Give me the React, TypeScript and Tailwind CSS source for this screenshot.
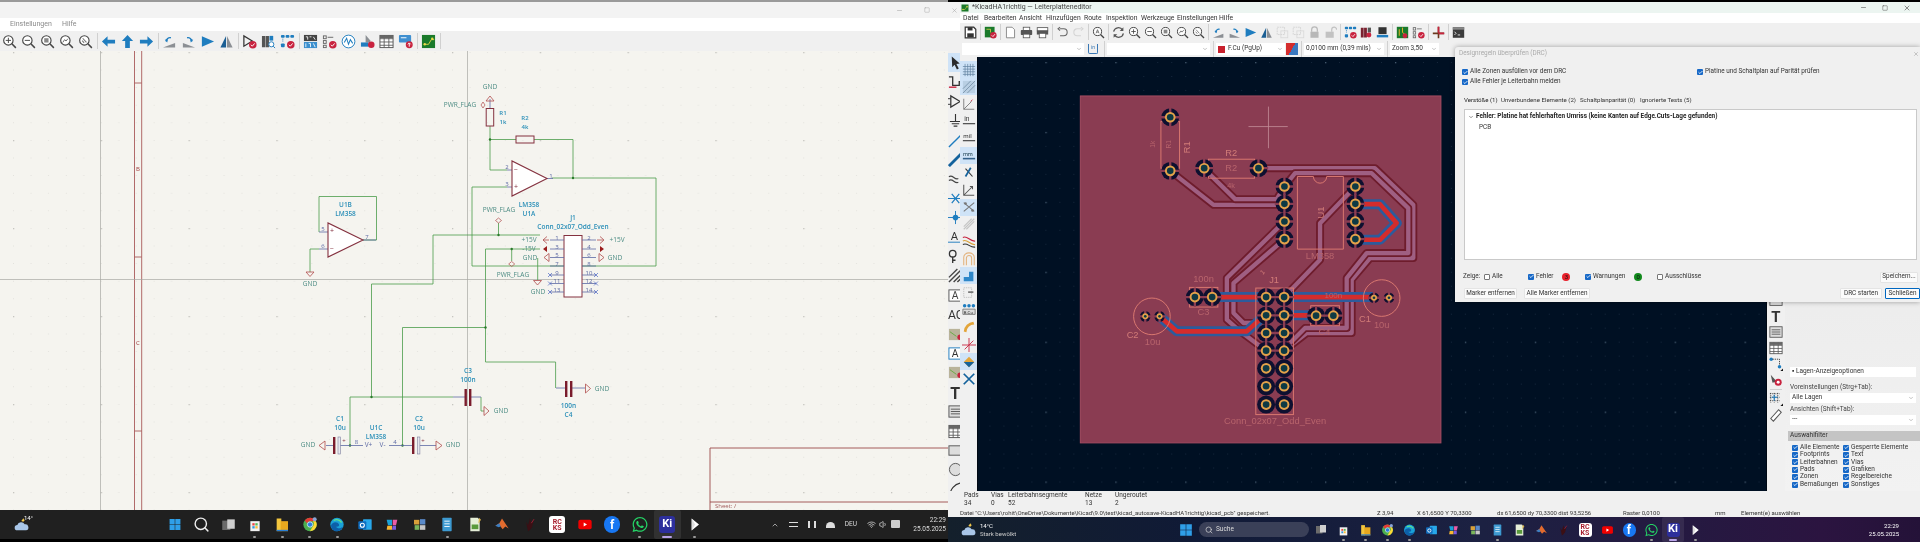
import type { ReactNode } from 'react';
import { FaWhatsapp } from 'react-icons/fa';
import { Check, ChevronDown, Minus, Search, Square, Wifi, Volume1, X, ChevronUp } from 'lucide-react';

const BLUE = '#1f7dbf';
const RED = '#c8233f';
const INK = '#444';

// 16x16 toolbar glyph
const G = ({ children, size = 15 }: { children: ReactNode; size?: number }) => (
  <svg viewBox="0 0 16 16" width={size} height={size} className="shrink-0">{children}</svg>
);

const Mag = ({ children }: { children?: ReactNode }) => (
  <>
    <circle cx="6.8" cy="6.8" r="5" fill="#fff" stroke={INK} strokeWidth="1.2" />
    <path d="M10.5 10.5L14.8 14.8" stroke={INK} strokeWidth="1.6" />
    {children}
  </>
);

const Badge = () => (
  <>
    <circle cx="11.5" cy="11.5" r="4" fill={RED} />
    <path d="M9.5 11.5l1.5 1.5 2.5-3" stroke="#fff" strokeWidth="1" fill="none" />
  </>
);

const icons: Record<string, ReactNode> = {
  zoomIn: <Mag><path d="M4 6.8h5.6M6.8 4v5.6" stroke={INK} strokeWidth="1" /></Mag>,
  zoomOut: <Mag><path d="M4 6.8h5.6" stroke={INK} strokeWidth="1" /></Mag>,
  zoomFit: <Mag><rect x="4.5" y="4.5" width="4.6" height="4.6" fill="#888" /></Mag>,
  zoomAuto: <Mag><path d="M4 9l2-3 1.5 1.5L9.5 5" stroke="#666" strokeWidth="1" fill="none" /></Mag>,
  zoomObj: <Mag><path d="M5 4.5l4 4.5M4.5 7l2 2.5" stroke="#777" strokeWidth="1.1" fill="none" /></Mag>,
  left: <path d="M1 8l6-5.5V6h8v4H7v3.5z" fill={BLUE} />,
  up: <path d="M8 1l6 6.5h-3.5V15h-5V7.5H2z" fill={BLUE} />,
  right: <path d="M15 8L9 2.5V6H1v4h8v3.5z" fill={BLUE} />,
  rotL: <><path d="M1 14.5L14 14.5 14 9.5z" fill="#8b8f94" /><path d="M4.5 8a4 4 0 015-4" stroke={BLUE} strokeWidth="1.4" fill="none" /><path d="M3 6l3.5-.5-1 3.500z" fill={BLUE} /></>,
  rotR: <><path d="M2 14.500L15 14.500 2 9.500z" fill="#8b8f94" /><path d="M11.500 8a4 4 0 00-5-4" stroke={BLUE} strokeWidth="1.4" fill="none" /><path d="M13 6l-3.500-.5 1 3.500z" fill={BLUE} /></>,
  flipH: <path d="M2 2.500L15 8 2 13.500z" fill={BLUE} />,
  flipV: <><path d="M7.500 2L7.500 14.500H1.500z" fill="#1c5f94" /><path d="M8.500 2L8.500 14.500H14.500z" fill="#8b8f94" /></>,
  symEdit: <><path d="M2 2v11l9-5.500z" fill="none" stroke="#333" strokeWidth="1.3" /><Badge /></>,
  libView: <><path d="M1 2h3.500v12H1zM5 2h3.500v12H5z" fill="#555" /><path d="M9 2h4v5H9z" fill="#1f7dbf" /><circle cx="11" cy="11" r="2.700" fill="#fff" stroke={BLUE} /><path d="M13 13l2 2" stroke={BLUE} /></>,
  pcbGear: <><rect x="1" y="1" width="4" height="3" rx="1" fill={BLUE} /><rect x="6" y="1" width="4" height="3" rx="1" fill={BLUE} /><rect x="11" y="1" width="4" height="3" rx="1" fill={BLUE} /><rect x="1" y="10" width="4" height="4" rx="1" fill={BLUE} /><path d="M3 5v4" stroke={BLUE} strokeDasharray="1 1" /><Badge /></>,
  annotate: <><rect x="1" y="1" width="14" height="6.500" fill="#444" /><rect x="1" y="8.500" width="14" height="6.500" fill="#3b8fce" /><path d="M3 3h2v3M7 3h2M11 3l2 3" stroke="#fff" strokeWidth=".9" fill="none" /><path d="M3 10v4M6 10h2v4M11 10l2 4" stroke="#fff" strokeWidth=".9" fill="none" /></>,
  erc: <><rect x="1.500" y="2" width="3" height="3" fill="none" stroke="#666" /><rect x="1.500" y="7" width="3" height="3" fill="none" stroke="#666" /><rect x="1.500" y="12" width="3" height="2.500" fill="none" stroke="#666" /><path d="M6 3.500h6" stroke="#666" /><Badge /></>,
  sim: <><circle cx="8" cy="8" r="6.800" fill="#fff" stroke={BLUE} strokeWidth="1" /><path d="M3.500 9L6 4.500 8 11 10 6l2.500 4" stroke={BLUE} strokeWidth="1.1" fill="none" /></>,
  bom: <><path d="M6 1l5 6v2H6z" fill="#8b8f94" /><rect x="1" y="9" width="8" height="4.500" fill={BLUE} /><circle cx="12" cy="11.500" r="3.500" fill={RED} /></>,
  table: <><rect x="1" y="1.500" width="14" height="13" fill="#fff" stroke="#555" /><path d="M1 5h14M1 8.500h14M1 12h14M5.500 1.500v13M10.500 1.500v13" stroke="#555" strokeWidth=".9" /><rect x="1" y="1.500" width="14" height="3" fill="#666" /></>,
  upload: <><rect x="1" y="1" width="13" height="8" rx="1" fill="#3f8fd0" /><path d="M3 4h6" stroke="#fff" /><circle cx="12" cy="11.500" r="3.700" fill={RED} /><path d="M12 13.500v-3.500M10.500 11l1.500-1.500 1.500 1.500" stroke="#fff" fill="none" /></>,
  board: <><rect x="1" y="1" width="14" height="14" fill="#1a7a2b" /><path d="M3 11h5l3-5h3" stroke="#d9d24a" strokeWidth="1" fill="none" /><circle cx="4" cy="11" r="1.300" fill="#e8d94a" /><circle cx="12" cy="5" r="1.300" fill="#e8d94a" /></>,
  save: <><path d="M1.500 1.500h10.500l2.500 2.500v10.500h-13z" fill="#fff" stroke="#333" strokeWidth="1.500" /><rect x="4.500" y="1.500" width="6" height="4" fill="#333" /><rect x="4" y="9" width="8" height="5" fill="#333" /></>,
  boardCheck: <><rect x="1" y="1" width="12" height="13" fill="#1a7a2b" /><path d="M3 4h5v4" stroke="#d9d24a" fill="none" /><Badge /></>,
  doc: <><path d="M3 1.500h7l3 3v10H3z" fill="#fff" stroke="#777" /></>,
  print: <><rect x="4" y="1.500" width="8" height="4" fill="#fff" stroke="#555" /><rect x="1" y="5" width="14" height="6" rx="1" fill="#555" /><rect x="4" y="10" width="8" height="4.500" fill="#fff" stroke="#555" /></>,
  plot: <><rect x="1.500" y="2" width="13" height="4" fill="#fff" stroke="#555" /><rect x="1" y="5.500" width="14" height="5" fill="#555" /><rect x="4" y="9" width="8" height="5.500" fill="#fff" stroke="#555" /></>,
  undo: <path d="M5 3.500H9.500a4 4 0 010 8.500H5M5 1.500L2.500 3.500 5 5.500" fill="none" stroke="#666" strokeWidth="1.300" />,
  redo: <path d="M11 3.500H6.500a4 4 0 000 8.500H11M11 1.500l2.500 2-2.500 2" fill="none" stroke="#d4d4d4" strokeWidth="1.300" />,
  find: <Mag><path d="M5 9l1.800-4.500L8.600 9M5.600 7.500h2.400" stroke="#555" strokeWidth=".9" fill="none" /></Mag>,
  refresh: <><path d="M2 7a6 6 0 0111-2M14 9a6 6 0 01-11 2" stroke="#555" strokeWidth="1.500" fill="none" /><path d="M14 1.500v4.500H9.500zM2 14.500V10h4.500z" fill="#555" /></>,
  group: <><path d="M1.500 1.500h9v9h-9z" fill="none" stroke="#cfcfcf" strokeDasharray="2 1" /><rect x="6" y="6" width="8.500" height="8.500" fill="none" stroke="#d8d8d8" /></>,
  lock: <><path d="M4.500 7V4.500a3.500 3.500 0 017 0V7" fill="none" stroke="#b8b8b8" strokeWidth="1.500" /><rect x="3" y="7" width="10" height="7.500" fill="#b8b8b8" /></>,
  unlock: <><path d="M9.500 7V4.500a3 3 0 016 0" fill="none" stroke="#c2c2c2" strokeWidth="1.500" /><rect x="2" y="7" width="10" height="7.500" fill="#c2c2c2" /></>,
  fpBrowse: <><path d="M1 2h3.500v12H1zM5 2h3.500v12H5z" fill="#7a2230" /><path d="M9.500 2h4v6h-4z" fill="#555" /><circle cx="11" cy="11" r="3" fill={RED} /></>,
  view3d: <><rect x="3" y="1.500" width="10" height="8.500" fill="#333" /><rect x="1" y="11" width="14" height="3" fill="#1f7dbf" /></>,
  net: <><path d="M1 1h14v14H1z" fill="#1a7a2b" /><path d="M4 4v8M8 2v6l4 3" stroke="#e3b32a" strokeWidth="1.200" fill="none" /><circle cx="11" cy="12" r="3" fill={RED} /></>,
  pin: <><path d="M8 1v14M1 9h14" stroke="#6b3a1f" strokeWidth="2" /><path d="M8 1v7M8 9h7" stroke="#c8233f" strokeWidth="2" /></>,
  term: <><rect x="1" y="1.500" width="14" height="13" fill="#3c3c3c" /><rect x="1" y="1.500" width="14" height="3" fill="#888" /><path d="M3 7l2 2-2 2M7 11h3" stroke="#fff" fill="none" /></>,
  select: <path d="M4 1.500l8.500 7.500-3.500.5 2.500 5-2 1-2.500-5-2.500 2.500z" fill="#2b2b2b" />,
  route: <><path d="M1 2h4v9h7v-4h3" fill="none" stroke="#333" strokeWidth="1.400" /><path d="M1 13h8" stroke={RED} strokeWidth="1.500" /></>,
  opamp: <><path d="M3 2v12l10-6z" fill="none" stroke="#333" strokeWidth="1.300" /><path d="M0 5h3M0 11h3M13 8h3" stroke="#333" /></>,
  ground: <path d="M8 1v8M2 9h12M4 11.500h8M6 14h4" stroke="#333" strokeWidth="1.200" />,
  line: <path d="M1 15L15 1" stroke={BLUE} strokeWidth="1.500" />,
  lineB: <path d="M1 15L15 1" stroke="#14629c" strokeWidth="3" />,
  wavy: <path d="M1 5c4-3 6 4 10 2M1 9c4-3 6 4 10 2" stroke="#444" strokeWidth="1.300" fill="none" />,
  xnet: <path d="M0 8h16M4 3l8 10M12 3l-8 10" stroke={BLUE} strokeWidth="1.300" />,
  junction: <><path d="M0 8h16M8 1v14" stroke={BLUE} /><circle cx="8" cy="8" r="3" fill={BLUE} /></>,
  labelA: <><text x="3" y="11" fontSize="12" fill="#333">A</text><path d="M0 13h16" stroke={BLUE} /></>,
  key: <><circle cx="5" cy="5" r="3.500" fill="none" stroke="#333" strokeWidth="1.400" /><path d="M5 8.500V15M5 12h3" stroke="#333" strokeWidth="1.400" /></>,
  hatch: <path d="M1 15L15 1M1 10l9-9M6 15l9-9M10 15l5-5" stroke="#444" strokeWidth="1.500" />,
  boxA: <><rect x="1" y="2" width="14" height="12" fill="#fff" stroke="#555" /><text x="4" y="12" fontSize="11" fill="#444">A</text></>,
  ac: <text x="0" y="12.500" fontSize="13" fill="#333">AC</text>,
  brd: <><rect x="1" y="2" width="14" height="12" fill="#b9b39a" /><path d="M2 5l7 5" stroke="#6a4" /><circle cx="13" cy="11" r="3" fill={RED} /></>,
  boxBlue: <><rect x="1" y="2" width="14" height="12" fill="#fff" stroke={BLUE} /><text x="4" y="12" fontSize="11" fill="#333">A</text></>,
  T: <text x="2.500" y="14.500" fontSize="17" fontWeight="700" fill="#333">T</text>,
  textBox: <><rect x="1" y="2" width="14" height="12" fill="#ddd" stroke="#555" /><path d="M3 5.500h10M3 8h10M3 10.500h10" stroke="#555" /></>,
  rect: <rect x="1" y="3" width="14" height="10" fill="#ddd" stroke="#555" />,
  circ: <circle cx="8" cy="8" r="6.500" fill="#ddd" stroke="#555" />,
  arc: <path d="M2 15C2 8 7 2 14 1" fill="none" stroke="#333" strokeWidth="1.200" />,
  tune: <><circle cx="2.500" cy="2.500" r="2" fill={BLUE} /><circle cx="12" cy="11" r="2" fill={BLUE} /><path d="M4 2.500h8v7" stroke="#333" strokeDasharray="1.500 1" fill="none" /><path d="M16 16h-3l3-3z" fill="#111" /></>,
  ptr: <><path d="M2 2l7 8-3 .5-2 .5z" fill="#555" /><circle cx="10.500" cy="10.500" r="4" fill="#c8233f" /><circle cx="10.500" cy="10.500" r="1.700" fill="#fff" /></>,
  gridFine: <><path d="M1 2h11M1 6h11M1 10h11M2 1v11M6 1v11M10 1v11" stroke="#333" strokeDasharray="1.300 1.300" /><path d="M6 3v7M3 6h7" stroke={BLUE} strokeWidth="1.200" /><path d="M16 16h-3l3-3z" fill="#111" /></>,
  ruler: <><path d="M2 12L11 2l3 3-9 10z" fill="#fff" stroke="#555" strokeWidth="1.200" /></>,
  grid: <><path d="M1 1h14v14H1z" fill="#cfe3f7" /><path d="M1 4h14M1 7h14M1 10h14M1 13h14M3.500 1v14M6.500 1v14M9.500 1v14M12.500 1v14" stroke="#5f7f9e" strokeWidth=".8" /></>,
  gridDiag: <><path d="M1 1h14v14H1z" fill="#b9cfe3" /><path d="M1 15L15 1M6 15l9-9M1 10l9-9" stroke="#7993ab" /></>,
  polar: <><path d="M2 14V2M2 14h12M2 14l9-9" stroke="#777" /><path d="M10 5l2-2" stroke={RED} /></>,
  inch: <><text x="2.500" y="8" fontSize="7.500" fill="#333">in</text><path d="M1 11h14" stroke="#555" strokeWidth="1.500" /></>,
  mil: <><text x="1.500" y="8" fontSize="7" fill="#333">mil</text><path d="M1 11h14" stroke="#555" strokeWidth="1.500" /></>,
  mm: <><text x="1" y="8" fontSize="6.500" fill="#245">mm</text><path d="M1 11h14" stroke="#34618a" strokeWidth="1.800" /></>,
  mouse: <><path d="M4 3l8 9" stroke="#333" strokeWidth="1.200" /><path d="M10 2L4 12" stroke="#14629c" strokeWidth="2" /></>,
  axis: <path d="M2 2v12h12M2 14L12 4M9 4h3v3" stroke="#555" fill="none" strokeWidth="1.200" />,
  ratsA: <><path d="M2 3l12 10M2 13L14 3" stroke="#777" strokeWidth="1.200" /><circle cx="4" cy="4" r="1.500" fill="#777" /><circle cx="12" cy="12" r="1.500" fill="#777" /></>,
  ratsB: <path d="M2 14L14 2M5 14L14 5M2 11L11 2" stroke="#c5c5c5" strokeWidth="1.300" />,
  curve: <><path d="M1 4c5-3 8 5 14 4" stroke={RED} strokeWidth="1.300" fill="none" /><path d="M1 8c5-3 8 5 14 4" stroke="#d9a13a" strokeWidth="1.300" fill="none" /><path d="M1 12c5-3 8 4 14 3" stroke="#333" strokeWidth="1.300" fill="none" /></>,
  rf: <path d="M2 15V6a6 5 0 0112 0v9M5 15V7a3 3 0 016 0v8" stroke="#e3b27c" fill="none" strokeWidth="1.200" />,
  zoneFill: <><rect x="1" y="1" width="14" height="14" fill="#cfe3f7" /><path d="M2 14h11V3H8v6H2z" fill="#2e87c9" /></>,
  dashLine: <><path d="M2 2h9v11H2z" stroke="#bbb" strokeDasharray="1.500 1" fill="none" /><path d="M7 7h6" stroke="#777" strokeWidth="2" /></>,
  netPads: <><circle cx="3" cy="3" r="2" fill={BLUE} /><circle cx="8" cy="3" r="2" fill={BLUE} /><circle cx="13" cy="3" r="2" fill={BLUE} /><path d="M1 7h14v6H1z" fill="#ddd" stroke="#777" /><text x="2" y="12" fontSize="5" fill="#333">B.Cu</text></>,
  protractor: <path d="M2 13A12 12 0 0113 2l1 3A9 9 0 005 14z" fill="#e3a53a" />,
  crossR: <path d="M0 8h16M8 0v16M3 13L13 3" stroke="#c8233f" strokeWidth="1" />,
  layerDot: <><rect x="1" y="1" width="14" height="14" fill="#cfe3f7" /><path d="M8 2l6 6-6 6-6-6z" fill="#e3a53a" /><path d="M8 8l6 0-6 6-6-6z" fill="#14629c" /></>,
  xBlue: <path d="M2 2l12 12M14 2L2 14" stroke="#14629c" strokeWidth="2" />,
};

const Tool = ({ name, w = 16, size = 15, on = false }: { name: string; w?: number; size?: number; on?: boolean }) => (
  <div className={`flex items-center justify-center shrink-0 h-[18px] ${on ? 'bg-[#cfe3f7]' : ''}`} style={{ width: w }}>
    <G size={size}>{icons[name]}</G>
  </div>
);

const Sep = () => (
  <div className="flex justify-center w-[4px] shrink-0">
    <div className="w-px h-[16px] bg-[#d0d0d0]" />
  </div>
);

const Combo = ({ w, children }: { w: string; children?: ReactNode }) => (
  <div className={`${w} h-[12px] bg-white flex items-center justify-between px-[2px] shrink-0 text-[6.500px] text-[#333]`}>
    <div className="flex items-center gap-[3px]">{children}</div>
    <ChevronDown size={6} color="#888" />
  </div>
);

// ---- taskbar ----
const Win = () => (
  <svg viewBox="0 0 24 24" className="w-full h-full">
    <path d="M2 2h9.500v9.500H2zM12.500 2H22v9.500h-9.500zM2 12.500h9.500V22H2zM12.500 12.500H22V22h-9.500z" fill="#2f9fe8" />
  </svg>
);

const appIcon: Record<string, ReactNode> = {
  store: <svg viewBox="0 0 24 24" className="w-full h-full"><path d="M5 7h14v15H5z" fill="#f2f2f2" /><rect x="8" y="10" width="3.500" height="3.500" fill="#e44" /><rect x="12.500" y="10" width="3.500" height="3.500" fill="#5b5" /><rect x="8" y="14.500" width="3.500" height="3.500" fill="#39d" /><rect x="12.500" y="14.500" width="3.500" height="3.500" fill="#fb3" /></svg>,
  explorer: <svg viewBox="0 0 24 24" className="w-full h-full"><path d="M4 3h7v19H4z" fill="#f4c63d" /><path d="M10 7h11v15H10z" fill="#e8a81e" /><path d="M4 20h17v2H4z" fill="#2a7fd4" /></svg>,
  chrome: <svg viewBox="0 0 24 24" className="w-full h-full"><circle cx="12" cy="12" r="10" fill="#4caf50" /><path d="M12 2a10 10 0 018.700 5H12a5 5 0 00-4.500 3L4 6a10 10 0 018-4z" fill="#e53935" /><path d="M20.700 7A10 10 0 0112 22l4.300-7.500a5 5 0 00-.2-7.500z" fill="#fdd835" /><circle cx="12" cy="12" r="4" fill="#2a7fe0" stroke="#fff" /><circle cx="19" cy="4" r="3" fill="#8aa4d6" /></svg>,
  edge: <svg viewBox="0 0 24 24" className="w-full h-full"><circle cx="12" cy="12" r="10" fill="#1aa2d8" /><path d="M3 14c1-6 10-7 12-2 1 3-3 4-5 3 3 4 8 3 11 0-2 6-8 8-12 7-3-1-6-4-6-8z" fill="#0d5fa8" /><path d="M7 6c4-2 9-1 12 3" stroke="#5fe08a" strokeWidth="2" fill="none" /></svg>,
  outlook: <svg viewBox="0 0 24 24" className="w-full h-full"><rect x="9" y="4" width="13" height="16" rx="1" fill="#28a8ea" /><rect x="2" y="7" width="12" height="12" rx="1.500" fill="#0f6cbd" /><circle cx="8" cy="13" r="3" fill="none" stroke="#fff" strokeWidth="1.600" /></svg>,
  copilot: <svg viewBox="0 0 24 24" className="w-full h-full"><path d="M4 5h8v8H6z" fill="#1aa2d8" /><path d="M13 5h7l-2 8h-5z" fill="#ec5ca8" /><path d="M5 14h7v6H4z" fill="#f7b733" /><path d="M13 14h5v6h-6z" fill="#7b5be0" /></svg>,
  photos: <svg viewBox="0 0 24 24" className="w-full h-full"><rect x="3" y="5" width="8" height="7" fill="#d9a13a" /><rect x="12" y="4" width="8" height="8" fill="#5a8ac9" /><rect x="4" y="13" width="7" height="7" fill="#7ab55c" /><rect x="12" y="13" width="8" height="7" fill="#c7c7c7" /></svg>,
  notepad: <svg viewBox="0 0 24 24" className="w-full h-full"><rect x="5" y="2" width="14" height="20" rx="1" fill="#3d9ad1" /><path d="M8 7h8M8 11h8M8 15h8" stroke="#e8f4fb" strokeWidth="1.500" /></svg>,
  sheet: <svg viewBox="0 0 24 24" className="w-full h-full"><path d="M5 2h11l3 3v17H5z" fill="#e6efd8" /><rect x="7" y="12" width="10" height="7" fill="#5a9a3c" /><path d="M18 2l3 3-4 6z" fill="#d8b34a" /></svg>,
  matlab: <svg viewBox="0 0 24 24" className="w-full h-full"><path d="M2 14l6-4 4-7 4 6 6 9-5-3-4 4-4-5z" fill="#e26b2e" /><path d="M2 14l6-4 2 5-3 1z" fill="#3b7fc4" /></svg>,
  dark: <svg viewBox="0 0 24 24" className="w-full h-full"><path d="M9 22L6 8l3 5 3-10 2 7 4-6-3 12-3 4z" fill="#3b0f14" /><path d="M14 10l4-6" stroke="#c8233f" strokeWidth="1" /></svg>,
  ks: <div className="w-full h-full bg-white rounded-[3px] flex items-center justify-center text-[7px] font-bold leading-[6px] text-[#a8202f] text-center">RC<br />KS</div>,
  yt: <svg viewBox="0 0 24 24" className="w-full h-full"><rect x="2" y="5" width="20" height="14" rx="3" fill="#f00000" /><path d="M10 9l5 3-5 3z" fill="#fff" /></svg>,
  fb: <div className="w-full h-full rounded-full bg-[#1877f2] flex items-center justify-center text-white font-bold text-[12px]">f</div>,
  wa: <FaWhatsapp className="w-full h-full text-[#25d366]" />,
  ki: <div className="w-full h-full rounded-[3px] bg-[#2d2f9c] flex items-center justify-center text-white font-bold text-[11px]">Ki</div>,
  play: <svg viewBox="0 0 24 24" className="w-full h-full"><path d="M7 3l11 9-11 9z" fill="#fff" /><path d="M7 3l5 9-5 9z" fill="#ddd" /></svg>,
  task: <svg viewBox="0 0 24 24" className="w-full h-full"><rect x="2" y="5" width="13" height="15" fill="#6b6b6b" /><rect x="10" y="3" width="12" height="15" fill="#cfcfcf" /></svg>,
};

const apps = ['store', 'explorer', 'chrome', 'edge', 'outlook', 'copilot', 'photos', 'notepad', 'sheet', 'matlab', 'dark', 'ks', 'yt', 'fb', 'wa', 'ki', 'play'];
const running = ['store', 'explorer', 'chrome', 'edge', 'notepad', 'wa', 'play'];

const Taskbar = ({ step, icon, big }: { step: string; icon: string; big: boolean }) => (
  <>
    {apps.map((a) => (
      <div key={a} className={`${step} h-full relative flex items-center justify-center shrink-0 ${a === 'ki' ? 'bg-[#ffffff14] rounded-[2px]' : ''}`}>
        <div className={icon}>{appIcon[a]}</div>
        {running.includes(a) && <div className="absolute bottom-[1px] w-[3px] h-[2px] rounded-full bg-[#9a9a9a]" />}
        {a === 'ki' && <div className={`absolute bottom-[1px] ${big ? 'w-[10px]' : 'w-[8px]'} h-[2px] rounded-full bg-[#b9a3e8]`} />}
      </div>
    ))}
  </>
);

// ---- schematic ----
const WIRE = '#4a9c4a';
const SYM = '#84313f';
const PWR = '#4d8c84';
const REF = '#2b8fb8';
const PIN = '#5d6aa5';

const wires = [
  'M490 126V170H507', 'M490 139.500H516', 'M534 139.500H573V178', 'M552 178H656V266H472V187H507',
  'M319 232V196.500H376.500V240H363', 'M319 249H310V272',
  'M540 235H433V284H371.500V397', 'M350 445.500V397H453',
  'M540 249H485.500V327.500', 'M402.500 445.500V327.500H485.500V362H555.600V388',
  'M498.500 223V235', 'M511.700 249V261', 'M537.700 258V280', 'M481 397V411H484',
];

const junctions: [number, number][] = [[490, 139.500], [573, 178], [498.500, 235], [511.700, 249], [371.500, 397], [485.500, 327.500], [350, 445.500], [402.500, 445.500]];

const Tx = ({ x, y, c = PWR, s = 6.500, a = 'middle', children }: { x: number; y: number; c?: string; s?: number; a?: 'middle' | 'start' | 'end'; children: ReactNode }) => (
  <text x={x} y={y} fill={c} fontSize={s} fontWeight={c === REF ? 600 : 400} textAnchor={a} dominantBaseline="middle">{children}</text>
);

const OpAmp = ({ pts }: { pts: string }) => <polygon points={pts} fill="#fff" stroke={SYM} strokeWidth="1.100" />;

const Cap = ({ x1, x2, y, h, pol }: { x1: number; x2: number; y: number; h: number; pol?: boolean }) => (
  <>
    <rect x={x1 - 1} y={y - h / 2} width="2.400" height={h} fill="#7a1c2c" />
    {pol ? <rect x={x2 - 1} y={y - h / 2} width="2.400" height={h} fill="#e8e8ee" stroke="#7d7f9e" strokeWidth=".6" /> : <rect x={x2 - 1} y={y - h / 2} width="2.400" height={h} fill="#7a1c2c" />}
  </>
);

const Schematic = () => (
  <svg viewBox="0 51 948 459" width="948" height="459" className="block font-['Open_Sans',sans-serif]">
    <defs>
      <pattern id="dots" x="13" y="52" width="87.800" height="88" patternUnits="userSpaceOnUse">
        {[0, 17.600, 35.200, 52.800, 70.400].map((y) => [0, 17.600, 35.200, 52.800, 70.400].map((x) => <rect key={`${x}${y}`} x={x} y={y} width=".8" height=".8" fill="#d9d8d3" />))}
      </pattern>
      <pattern id="dotsMajor" x="13" y="140" width="87.800" height="88" patternUnits="userSpaceOnUse">
        <rect width="1.300" height="1.300" fill="#c6c5c0" />
      </pattern>
    </defs>
    <rect x="0" y="51" width="948" height="459" fill="#f5f4ef" />
    <rect x="0" y="51" width="948" height="459" fill="url(#dots)" />
    <rect x="0" y="51" width="948" height="459" fill="url(#dotsMajor)" />

    {/* sheet border */}
    <path d="M134.500 51V510M141.700 51V510M134.500 83H141.700M134.500 257H141.700M134.500 431H141.700" stroke="#a95a5a" strokeWidth=".9" fill="none" />
    <Tx x={138} y={169} c="#a03c3c" s={6}>B</Tx>
    <Tx x={138} y={343} c="#a03c3c" s={6}>C</Tx>
    <path d="M710 510V448H948M710 502H948" stroke="#9c4a4a" strokeWidth=".9" fill="none" />
    <Tx x={715} y={506.500} c="#a05a5a" s={6} a="start">Sheet: /</Tx>

    {/* crosshair */}
    <path d="M100.500 51V510M467.500 51V510M0 279.500H948" stroke="#a8a8a4" strokeWidth=".7" />

    <g fill="none" stroke={WIRE} strokeWidth=".8">
      {wires.map((d) => <path key={d} d={d} />)}
    </g>
    {junctions.map(([x, y]) => <circle key={`${x}${y}`} cx={x} cy={y} r="1.200" fill="#2a7a2a" />)}

    {/* R1 R2 */}
    <path d="M490 99V108" stroke={PIN} strokeWidth=".8" />
    <rect x="486.200" y="108.500" width="7.500" height="17.500" fill="none" stroke={SYM} strokeWidth="1" />
    <rect x="516" y="136" width="18" height="7" fill="none" stroke={SYM} strokeWidth="1" />
    <Tx x={490} y={87}>GND</Tx>
    <path d="M490 96l-4 5h8z" fill="none" stroke="#b04c4c" strokeWidth=".8" />
    <Tx x={460} y={105}>PWR_FLAG</Tx>
    <path d="M483 102l2 3-2 3-2-3z" fill="none" stroke="#b04c4c" strokeWidth=".7" />
    <Tx x={503} y={113} c={REF} s={6}>R1</Tx>
    <Tx x={503} y={122} c={REF} s={6}>1k</Tx>
    <Tx x={525} y={118} c={REF} s={6}>R2</Tx>
    <Tx x={525} y={127} c={REF} s={6}>4k</Tx>

    {/* U1A */}
    <path d="M507 170H512M507 187H512M547 178.500H553" stroke={PIN} strokeWidth=".8" />
    <OpAmp pts="512,161 512,196 547,178.500" />
    <Tx x={507} y={167} c={PIN} s={6}>2</Tx>
    <Tx x={507} y={184} c={PIN} s={6}>3</Tx>
    <Tx x={551} y={176} c={PIN} s={6}>1</Tx>
    <Tx x={516} y={170} c={SYM} s={7}>−</Tx>
    <Tx x={516} y={187.500} c={SYM} s={7}>+</Tx>
    <Tx x={529} y={205} c={REF} s={6.500}>LM358</Tx>
    <Tx x={529} y={214} c={REF} s={6.500}>U1A</Tx>

    {/* U1B */}
    <path d="M319 232H328M319 249H328M363 240H376" stroke={PIN} strokeWidth=".8" />
    <OpAmp pts="328,223 328,257 363,240" />
    <Tx x={323} y={229} c={PIN} s={6}>5</Tx>
    <Tx x={323} y={246} c={PIN} s={6}>6</Tx>
    <Tx x={367} y={237} c={PIN} s={6}>7</Tx>
    <Tx x={332} y={231.500} c={SYM} s={7}>+</Tx>
    <Tx x={332} y={249} c={SYM} s={7}>−</Tx>
    <Tx x={345.500} y={205} c={REF} s={6.500}>U1B</Tx>
    <Tx x={345.500} y={214} c={REF} s={6.500}>LM358</Tx>
    <path d="M306 272h8l-4 4.500z" fill="none" stroke="#b04c4c" strokeWidth=".8" />
    <Tx x={310} y={284}>GND</Tx>

    {/* PWR flags */}
    <Tx x={499} y={210}>PWR_FLAG</Tx>
    <path d="M498.500 218l3 2.500-3 2.500-3-2.500z" fill="none" stroke="#b04c4c" strokeWidth=".7" />
    <Tx x={513} y={275}>PWR_FLAG</Tx>
    <path d="M511.700 261.500l3 2.500-3 2.500-3-2.500z" fill="none" stroke="#b04c4c" strokeWidth=".7" />

    {/* J1 */}
    <Tx x={573} y={218} c={REF} s={6.500}>J1</Tx>
    <Tx x={573} y={227} c={REF} s={6.500}>Conn_02x07_Odd_Even</Tx>
    <rect x="564" y="235.500" width="18" height="61.500" fill="#fff" stroke={SYM} strokeWidth="1" />
    {[240, 249, 257.500, 266, 275, 283.500, 292].map((y, i) => (
      <g key={y}>
        <path d={`M550 ${y}H564M582 ${y}H596`} stroke={PIN} strokeWidth=".8" />
        <Tx x={557} y={y - 2} c={PIN} s={6}>{i * 2 + 1}</Tx>
        <Tx x={589} y={y - 2} c={PIN} s={6}>{i * 2 + 2}</Tx>
        {i > 3 && <path d={`M548 ${y - 2}l4 4m0-4l-4 4M594 ${y - 2}l4 4m0-4l-4 4`} stroke="#4a66c4" strokeWidth=".7" />}
      </g>
    ))}
    <path d="M549 240h-6M547 236.500l-4 3.500 4 3.500M597 240h6M600 236.500l4 3.500-4 3.500" fill="none" stroke="#b04c4c" strokeWidth=".8" />
    <path d="M543 249l4-3v6zM604 249l-4-3v6z" fill="#9a1c1c" />
    <path d="M549 253.500l-5 4 5 4zM599 253.500l5 4-5 4z" fill="none" stroke="#b04c4c" strokeWidth=".8" />
    <Tx x={529} y={240}>+15V</Tx>
    <Tx x={529} y={249}>-15V</Tx>
    <Tx x={530} y={258}>GND</Tx>
    <Tx x={617} y={240}>+15V</Tx>
    <Tx x={615} y={258}>GND</Tx>
    <path d="M533.500 280.500h8l-4 4.500z" fill="none" stroke="#b04c4c" strokeWidth=".8" />
    <Tx x={538} y={292}>GND</Tx>

    {/* U1C, C1, C2 */}
    <path d="M326 445.500H334M339 445.500H363M389 445.500H413M418.500 445.500H436" stroke={PIN} strokeWidth=".8" />
    <Cap x1={334} x2={339} y={445.500} h={17} pol />
    <Cap x1={413} x2={418.500} y={445.500} h={17} pol />
    <path d="M325 441l-6 4.500 6 4.500zM436 441l6 4.500-6 4.500z" fill="none" stroke="#b04c4c" strokeWidth=".8" />
    <Tx x={308} y={445.500}>GND</Tx>
    <Tx x={453} y={445.500}>GND</Tx>
    <Tx x={340} y={419} c={REF}>C1</Tx>
    <Tx x={340} y={428} c={REF}>10u</Tx>
    <Tx x={419} y={419} c={REF}>C2</Tx>
    <Tx x={419} y={428} c={REF}>10u</Tx>
    <Tx x={344} y={441} c={SYM} s={6}>+</Tx>
    <Tx x={423} y={441} c={SYM} s={6}>+</Tx>
    <Tx x={356.500} y={442.500} c={PIN} s={6}>8</Tx>
    <Tx x={395} y={442.500} c={PIN} s={6}>4</Tx>
    <Tx x={368.500} y={445.500} c={PIN} s={6.500}>V+</Tx>
    <Tx x={382.500} y={445.500} c={PIN} s={6.500}>V-</Tx>
    <Tx x={376} y={428} c={REF}>U1C</Tx>
    <Tx x={376} y={437} c={REF}>LM358</Tx>

    {/* C3, C4 */}
    <path d="M453 397H465M470 397H481M556 388H565M571 388H585" stroke={PIN} strokeWidth=".8" />
    <Cap x1={465.500} x2={470} y={397.500} h={17} />
    <Cap x1={566} x2={571} y={389} h={16} />
    <path d="M484 406.500l5 4.500-5 4.500zM585.500 384l5 4.500-5 4.500z" fill="none" stroke="#b04c4c" strokeWidth=".8" />
    <Tx x={501} y={411}>GND</Tx>
    <Tx x={602} y={389}>GND</Tx>
    <Tx x={468} y={371} c={REF}>C3</Tx>
    <Tx x={468} y={380} c={REF}>100n</Tx>
    <Tx x={568.500} y={406} c={REF}>100n</Tx>
    <Tx x={568.500} y={415} c={REF}>C4</Tx>
  </svg>
);

// ---- pcb ----
const ZONE = '#8a3c52';

const Pad = ({ x, y, thermal = false, small = false }: { x: number; y: number; thermal?: boolean; small?: boolean }) => {
  const r = small ? 16 : 27;
  return (
    <g>
      <circle cx={x} cy={y} r={r} fill="#0e1030" />
      {thermal && <path d={`M${x - r - 2} ${y}H${x + r + 2}M${x} ${y - r - 2}V${y + r + 2}`} stroke={ZONE} strokeWidth="7" />}
      <circle cx={x} cy={y} r={small ? 9 : 16} fill="#e2a24a" />
      <circle cx={x} cy={y} r={small ? 4 : 10} fill="#0d3a44" />
    </g>
  );
};

const Track = ({ d }: { d: string }) => (
  <g fill="none" strokeLinejoin="round">
    <path d={d} stroke="#6e1c2c" strokeWidth="24" />
    <path d={d} stroke="#9f5f82" strokeWidth="13" />
  </g>
);

const Red = ({ d }: { d: string }) => (
  <g fill="none" strokeLinejoin="round">
    <path d={d} stroke="#2d5b9c" strokeWidth="30" />
    <path d={d} stroke="#d42c2c" strokeWidth="14" />
  </g>
);

const Silk = ({ x, y, s = 28, dim = false, rot, children }: { x: number; y: number; s?: number; dim?: boolean; rot?: number; children: ReactNode }) => (
  <text x={x} y={y} fontSize={s} fill={dim ? '#b8646c' : '#d27c78'} textAnchor="middle" dominantBaseline="middle" transform={rot ? `rotate(${rot} ${x} ${y})` : undefined}>{children}</text>
);

const tracks = [
  'M300 243L430 345H640',
  'M400 235L495 328H620L643 290',
  'M565 235H915L1030 345V505H900L845 570V730H710L642 783',
  'M643 290L675 250H905L1015 355V490H890L830 565V715H705L660 760',
  'M643 395L470 565V690L510 725L588 783',
  'M643 448L490 580V670L520 700H560L588 677',
  'M856 290L750 400V510L642 622',
];

const Pcb = () => (
  <svg viewBox="0 0 790 434.500" width="790" height="434.500" className="block w-full h-full font-['Liberation_Sans',sans-serif]">
    <defs>
      <pattern id="pcbDots" x="68" y="5" width="70" height="70" patternUnits="userSpaceOnUse">
        {[0, 14, 28, 42, 56].map((y) => [0, 14, 28, 42, 56].map((x) => <rect key={`${x}${y}`} x={x} y={y} width=".9" height=".9" fill="#1b2c42" />))}
        <rect width="1.300" height="1.300" fill="#465b70" />
      </pattern>
    </defs>
    <rect width="790" height="434.500" fill="#001023" />
    <rect width="790" height="434.500" fill="url(#pcbDots)" />
    <g transform="translate(93 33) scale(.33333)">
      <rect x="30" y="18" width="1083" height="1042" fill={ZONE} stroke="#a34c62" strokeWidth="3" />
      {tracks.map((d) => <Track key={d} d={d} />)}
      <Red d="M860 343H930L980 400L930 450H860" />
      <Red d="M426 622H588" />
      <Red d="M642 622H912" />
      <Red d="M642 677H738" />
      <Red d="M268 680L320 725H530L580 680" />

      <g fill="none" stroke="#d9776f" strokeWidth="3">
        <rect x="272" y="95" width="56" height="140" />
        <rect x="415" y="208" width="138" height="57" />
        <path d="M682 260H730A20 20 0 00770 260H820V478H682Z" />
        <rect x="557" y="595" width="113" height="380" />
        <rect x="358" y="593" width="85" height="59" />
        <rect x="722" y="648" width="86" height="60" />
        <circle cx="935" cy="625" r="55" />
        <circle cx="245" cy="680" r="55" />
      </g>
      <path d="M535 110H653M595 50V175" stroke="#c28a96" strokeWidth="2.500" />

      {[[300, 82], [300, 243], [402, 235], [565, 235], [643, 290], [643, 342], [643, 395], [643, 448], [856, 290], [856, 342], [856, 395], [856, 448], [588, 622], [642, 622], [588, 677], [642, 677], [588, 730], [642, 730], [588, 783], [642, 783], [374, 622], [426, 622], [738, 678], [790, 678]].map(([x, y]) => (
        <Pad key={`${x}-${y}`} x={x} y={y} thermal />
      ))}
      {[[588, 836], [642, 836], [588, 890], [642, 890], [588, 945], [642, 945]].map(([x, y]) => (
        <Pad key={`${x}-${y}`} x={x} y={y} />
      ))}
      {[[912, 624], [957, 624], [225, 680], [268, 680]].map(([x, y]) => (
        <Pad key={`${x}-${y}`} x={x} y={y} small thermal />
      ))}

      <Silk x={352} y={172} rot={-90}>R1</Silk>
      <Silk x={250} y={163} s={20} dim rot={-90}>1k</Silk>
      <Silk x={298} y={163} s={20} dim rot={-90}>R1</Silk>
      <Silk x={483} y={190}>R2</Silk>
      <Silk x={483} y={235} dim>R2</Silk>
      <Silk x={483} y={288} s={22} dim>4k</Silk>
      <Silk x={755} y={368} rot={-90}>U1</Silk>
      <Silk x={750} y={500} dim>LM358</Silk>
      <Silk x={400} y={570} dim>100n</Silk>
      <Silk x={400} y={670} dim>C3</Silk>
      <Silk x={612} y={573}>J1</Silk>
      <Silk x={578} y={548} s={20} rot={-45}>1</Silk>
      <Silk x={763} y={728} dim>C4</Silk>
      <Silk x={885} y={690}>C1</Silk>
      <Silk x={935} y={707} dim>10u</Silk>
      <Silk x={187} y={737}>C2</Silk>
      <Silk x={247} y={760} dim>10u</Silk>
      <Silk x={790} y={618} s={24} dim>100n</Silk>
      <Silk x={615} y={997} dim>Conn_02x07_Odd_Even</Silk>
    </g>
  </svg>
);

// ---- dialog bits ----
const Cb = ({ on = true }: { on?: boolean }) => (
  <span className={`inline-flex items-center justify-center w-[6px] h-[6px] rounded-[1px] shrink-0 ${on ? 'bg-[#1668c7]' : 'bg-white border border-[#777]'}`}>
    {on && <Check size={5} color="#fff" strokeWidth={4} />}
  </span>
);

const Btn = ({ w, blue, children }: { w: string; blue?: boolean; children: ReactNode }) => (
  <div className={`${w} h-[11px] flex items-center justify-center bg-[#fbfbfb] border rounded-[1px] text-[6.400px] text-[#333] ${blue ? 'border-[#0067c0]' : 'border-[#e4e4e4]'}`}>{children}</div>
);

const Count = ({ bg, children }: { bg: string; children: ReactNode }) => (
  <span className={`w-[8px] h-[8px] rounded-full ${bg} text-[#111] text-[6px] flex items-center justify-center`}>{children}</span>
);

const Dialog = () => (
  <div className="absolute left-[1455px] top-[47px] w-[465px] h-[255px] bg-[#f0f0f0] rounded-tl-[3px] shadow-[0_0_5px_rgba(0,0,0,0.35)] flex flex-col text-[6.400px] text-[#333]">
    <div className="h-[14px] shrink-0 flex items-center justify-between pl-[4px] pr-[1px] text-[#aaaaaa]">
      <span>Designregeln überprüfen (DRC)</span>
      <X size={6} color="#999" />
    </div>
    <div className="flex pl-[7px] pt-[8px] h-[30px] shrink-0">
      <div className="w-[235px] flex flex-col gap-[4px]">
        <div className="flex items-center gap-[2px] h-[6px]"><Cb /><span>Alle Zonen ausfüllen vor dem DRC</span></div>
        <div className="flex items-center gap-[2px] h-[6px]"><Cb /><span>Alle Fehler je Leiterbahn melden</span></div>
      </div>
      <div className="flex items-center gap-[2px] h-[6px]"><Cb /><span>Platine und Schaltplan auf Parität prüfen</span></div>
    </div>
    <div className="h-[18px] shrink-0 pl-[9px] flex items-center text-[6.100px]">
      <span className="w-[37px] text-[#222]">Verstöße (1)</span>
      <span className="w-[79px]">Unverbundene Elemente (2)</span>
      <span className="w-[60px]">Schaltplanparität (0)</span>
      <span>Ignorierte Tests (5)</span>
    </div>
    <div className="ml-[9px] mr-[3px] h-[151px] bg-white border border-[#c9c9c9] pt-[2px] shrink-0">
      <div className="flex items-center h-[9px] pl-[3px] gap-[2px]">
        <ChevronDown size={6} color="#333" />
        <span className="font-bold text-[#222]">Fehler: Platine hat fehlerhaften Umriss (keine Kanten auf Edge.Cuts-Lage gefunden)</span>
      </div>
      <div className="pl-[14px] pt-[2px] leading-[9px]">PCB</div>
    </div>
    <div className="flex items-center h-[12px] mt-[11px] pl-[8px] pr-[2px] shrink-0">
      <span className="w-[21px]">Zeige:</span>
      <span className="w-[44px] flex items-center gap-[2px]"><Cb on={false} />Alle</span>
      <span className="w-[57px] flex items-center gap-[2px]"><Cb />Fehler<span className="w-[5px]" /><Count bg="bg-[#e8212b]">3</Count></span>
      <span className="w-[72px] flex items-center gap-[2px]"><Cb />Warnungen<span className="w-[5px]" /><Count bg="bg-[#118a1c]">0</Count></span>
      <span className="flex items-center gap-[2px]"><Cb on={false} />Ausschlüsse</span>
      <div className="ml-auto"><Btn w="w-[38px]">Speichern...</Btn></div>
    </div>
    <div className="flex items-center h-[11px] mt-[5px] pl-[9px] gap-[7px] shrink-0">
      <Btn w="w-[53px]">Marker entfernen</Btn>
      <Btn w="w-[66px]">Alle Marker entfernen</Btn>
      <div className="ml-auto flex gap-[3px]">
        <Btn w="w-[42px]">DRC starten</Btn>
        <Btn w="w-[35px]" blue>Schließen</Btn>
      </div>
    </div>
  </div>
);

// ---- toolbars data ----
const leftTools = ['zoomIn', 'zoomOut', 'zoomFit', 'zoomAuto', 'zoomObj', '|', 'left', 'up', 'right', '|', 'rotL', 'rotR', 'flipH', 'flipV', '|', 'symEdit', 'libView', 'pcbGear', '|', 'annotate', 'erc', 'sim', 'bom', 'table', 'upload', '|', 'board', '|'];
const topTools = ['save', '|', 'boardCheck', '|', 'doc', 'print', 'plot', '|', 'undo', 'redo', '|', 'find', '|', 'refresh', 'zoomIn', 'zoomOut', 'zoomFit', 'zoomAuto', 'zoomObj', '|', 'rotL', 'rotR', 'flipH', 'flipV', 'group', 'group', 'lock', 'unlock', '|', 'pcbGear', 'fpBrowse', 'view3d', '|', 'net', 'erc', '|', 'pin', '|', 'term'];
const colA = ['select', 'route', 'opamp', 'ground', 'line', 'lineB', 'wavy', 'xnet', 'junction', 'labelA', 'key', 'hatch', 'boxA', 'ac', 'brd', 'boxBlue', 'brd', 'T', 'textBox', 'table', 'rect', 'circ', 'arc'];
const colB = ['grid', 'gridDiag', 'polar', 'inch', 'mil', 'mm', 'mouse', 'axis', 'ratsA', 'ratsB', 'curve', 'rf', 'zoneFill', 'dashLine', 'netPads', 'protractor', 'crossR', 'layerDot', 'xBlue'];
const colBOn = ['grid', 'gridDiag', 'mm', 'ratsA', 'zoneFill', 'layerDot'];

const filters = [
  ['Alle Elemente', 'Gesperrte Elemente'],
  ['Footprints', 'Text'],
  ['Leiterbahnen', 'Vias'],
  ['Pads', 'Grafiken'],
  ['Zonen', 'Regelbereiche'],
  ['Bemaßungen', 'Sonstiges'],
];

const stats = [
  ['Pads', '34', 'w-[27px]'],
  ['Vias', '0', 'w-[17px]'],
  ['Leiterbahnsegmente', '52', 'w-[77px]'],
  ['Netze', '13', 'w-[30px]'],
  ['Ungeroutet', '2', 'w-[40px]'],
];

export default function App() {
  return (
    <div className="relative flex w-[1920px] h-[542px] overflow-hidden whitespace-nowrap bg-black font-['Roboto','Noto_Sans',sans-serif] blur-[0.4px]">
      {/* schematic window */}
      <div className="w-[948px] shrink-0 flex flex-col">
        <div className="h-[2px] bg-[#9a9a9a]" />
        <div className="h-[16px] bg-[#f3f3f3] flex items-center justify-end gap-[21px] pr-[18px]">
          <Minus size={7} color="#aaa" />
          <Square size={6} color="#aaa" />
        </div>
        <div className="h-[13px] bg-white flex items-center pl-[10px] text-[7px] text-[#8a8a8a]">
          <span className="w-[52px]">Einstellungen</span>
          <span>Hilfe</span>
        </div>
        <div className="h-[20px] bg-[#f0f0f0] flex items-center">
          {leftTools.map((t, i) => (t === '|' ? <Sep key={i} /> : <Tool key={i} name={t} w={19} />))}
        </div>
        <Schematic />
        <div className="h-[29px] bg-[#202020] flex items-center relative text-white">
          <div className="w-[164px] pl-[14px] shrink-0 relative h-full flex items-center">
            <svg viewBox="0 0 24 24" width="16" height="18"><path d="M14 2l2 3-2 2-3-1z" fill="#f2c84b" /><path d="M5 20a4 4 0 010-8 6 6 0 0111-1 4.500 4.500 0 012 9z" fill="#a9c6e8" /></svg>
            <span className="absolute left-[24px] top-[3px] text-[6px]">14°</span>
          </div>
          <div className="w-[22px] h-[17px] p-[2px] shrink-0"><Win /></div>
          <div className="w-[30px] flex justify-center shrink-0"><Search size={17} color="#eee" /></div>
          <div className="w-[25px] h-[16px] flex justify-center shrink-0"><div className="w-[15px] h-full">{appIcon.task}</div></div>
          <Taskbar step="w-[27.500px]" icon="w-[16px] h-[17px]" big />
          <div className="ml-auto flex items-center gap-[10px] pr-[2px] text-[6.500px] text-[#ddd]">
            <ChevronUp size={8} />
            <span className="w-[9px] h-[5px] border-y border-[#ddd]" />
            <span className="w-[8px] h-[7px] border-x-2 border-[#ddd]" />
            <span className="w-[9px] h-[6px] rounded-t-full bg-[#ddd]" />
            <span>DEU</span>
            <span className="flex gap-[3px]"><Wifi size={9} /><Volume1 size={9} /><span className="w-[9px] h-[8px] bg-[#ccc] rounded-[1px]" /></span>
            <span className="flex flex-col items-end leading-[9px] w-[36px]"><span>22:29</span><span>25.05.2025</span></span>
          </div>
        </div>
        <div className="flex-1 bg-black" />
      </div>

      {/* pcb window */}
      <div className="flex-1 flex flex-col min-w-0">
        <div className="h-[491px] flex shrink-0">
          {/* far left column, shared with the other window's chrome at the top */}
          <div className="w-[12px] shrink-0 flex flex-col bg-[#f0f0f0]">
            <div className="h-[2px] bg-black" />
            <div className="h-[16px] bg-[#f3f3f3] flex items-center justify-center"><X size={7} color="#aaa" /></div>
            <div className="h-[13px] bg-white" />
            <div className="h-[22px]" />
            <div className="overflow-hidden flex-1">
              {colA.map((t, i) => (
                <div key={i} className={`h-[19.400px] w-[16px] flex items-center ${i === 0 ? 'bg-[#cfe3f7]' : ''}`}>
                  <G size={15}>{icons[t]}</G>
                </div>
              ))}
            </div>
          </div>
          <div className="flex-1 flex flex-col min-w-0">
            <div className="h-[2px] bg-black" />
            <div className="h-[11px] bg-[#ecf5f1] flex items-center pl-[1px] text-[7px] text-[#444]">
              <G size={8}>{icons.board}</G>
              <span className="ml-[3px]">*KicadHA1richtig — Leiterplatteneditor</span>
              <div className="ml-auto flex items-center gap-[15px] pr-[9px]">
                <Minus size={7} color="#555" />
                <Square size={6} color="#555" />
                <X size={8} color="#555" />
              </div>
            </div>
            <div className="h-[10px] bg-white flex items-center pl-[3px] text-[6.800px] text-[#333]">
              {[['Datei', 'w-[21px]'], ['Bearbeiten', 'w-[35px]'], ['Ansicht', 'w-[27px]'], ['Hinzufügen', 'w-[38px]'], ['Route', 'w-[22px]'], ['Inspektion', 'w-[35px]'], ['Werkzeuge', 'w-[36px]'], ['Einstellungen', 'w-[42px]'], ['Hilfe', 'w-[20px]']].map(([m, w]) => (
                <span key={m} className={w}>{m}</span>
              ))}
            </div>
            <div className="h-[18px] bg-[#f0f0f0] flex items-center pl-[2px]">
              {topTools.map((t, i) => (t === '|' ? <Sep key={i} /> : <Tool key={i} name={t} w={16} size={13} />))}
            </div>
            <div className="h-[16px] bg-[#f0f0f0] flex items-center pl-[2px] gap-[1px]">
              <Combo w="w-[122px]" />
              <div className="w-[16px] flex justify-center"><span className="w-[10px] h-[10px] border-x border-b border-[#3a78b5] rounded-b-[2px] text-[5px] text-center text-[#3a78b5]">in</span></div>
              <Sep />
              <Combo w="w-[103px]" />
              <Sep />
              <Combo w="w-[69px]"><span className="w-[7px] h-[7px] bg-[#c8202c]" />F.Cu (PgUp)</Combo>
              <div className="w-[12px] h-[12px] bg-[linear-gradient(120deg,#d42c2c_50%,#3a78c0_50%)]" />
              <Sep />
              <Combo w="w-[80px]">0,0100 mm (0,39 mils)</Combo>
              <Sep />
              <Combo w="w-[49px]">Zoom 3,50</Combo>
            </div>
            <div className="flex-1 flex min-h-0">
              <div className="w-[17px] bg-[#f0f0f0] shrink-0 pt-[4px]">
                {colB.map((t) => (
                  <div key={t} className={`h-[17.200px] flex items-center justify-center ${colBOn.includes(t) ? 'bg-[#cfe3f7]' : ''}`}>
                    <G size={14}>{icons[t]}</G>
                  </div>
                ))}
              </div>
              <div className="flex-1 min-w-0 overflow-hidden"><Pcb /></div>
              <div className="w-[18px] bg-[#f0f0f0] shrink-0 flex flex-col items-center justify-end pb-[68px]">
                <div className="h-[8px]" />
                {['rect', 'T', 'textBox', 'table', 'tune', 'ptr'].map((t, i) => (
                  <div key={i} className={`flex items-center justify-center ${i === 0 ? 'h-[14px]' : 'h-[16px]'}`}><G size={14}>{icons[t]}</G></div>
                ))}
                <div className="h-px w-[12px] bg-[#cfcfcf] my-[1px]" />
                <div className="h-[16px] flex items-center"><G size={14}>{icons.gridFine}</G></div>
                <div className="h-[16px] flex items-center"><G size={14}>{icons.ruler}</G></div>
              </div>
              <div className="w-[135px] shrink-0 bg-[linear-gradient(#e6e6e6,#f2f2f2)] flex flex-col justify-end text-[6.500px] text-[#333]">
                <div className="ml-[5px] mr-[4px] h-[10px] bg-white flex items-center pl-[2px]">▪ Lagen-Anzeigeoptionen</div>
                <div className="ml-[5px] mr-[4px] mt-[6px] h-[9px] flex items-center text-[#444]">Voreinstellungen (Strg+Tab):</div>
                <div className="ml-[5px] mr-[4px] mt-[1px] h-[10px] bg-white flex items-center justify-between px-[2px]"><span>Alle Lagen</span><ChevronDown size={6} color="#888" /></div>
                <div className="ml-[5px] mr-[4px] mt-[2px] h-[9px] flex items-center text-[#444]">Ansichten (Shift+Tab):</div>
                <div className="ml-[5px] mr-[4px] mt-[1px] h-[10px] bg-white flex items-center justify-between px-[2px]"><span>---</span><ChevronDown size={6} color="#888" /></div>
                <div className="ml-[3px] mt-[6px] h-[10px] bg-[#c4c4c4] flex items-center pl-[2px]">Auswahlfilter</div>
                <div className="h-[50px] pt-[3px] pl-[7px]">
                  {filters.map(([a, b]) => (
                    <div key={a} className="h-[7.400px] flex items-center">
                      <div className="w-[51px] flex items-center gap-[2px]"><Cb />{a}</div>
                      <div className="flex items-center gap-[2px]"><Cb />{b}</div>
                    </div>
                  ))}
                </div>
              </div>
            </div>
          </div>
        </div>

        <div className="h-[17px] bg-[#f0f0f0] flex pl-[16px] pt-[1px] text-[6.500px] text-[#333] shrink-0">
          {stats.map(([label, value, w]) => (
            <div key={label} className={`${w} flex flex-col leading-[7.500px]`}>
              <span>{label}</span>
              <span>{value}</span>
            </div>
          ))}
        </div>
        <div className="h-[9px] bg-[#f0f0f0] flex items-center pl-[12px] text-[6px] text-[#333] shrink-0">
          <span className="w-[417px]">Datei "C:\Users\rohit\OneDrive\Dokumente\Kicad\9.0\test\kicad_autosave-KicadHA1richtig\kicad_pcb" gespeichert.</span>
          <span className="w-[40px]">Z 3,94</span>
          <span className="w-[80px]">X 61,6500 Y 70,3300</span>
          <span className="w-[126px]">dx 61,6500 dy 70,3300 dist 93,5256</span>
          <span className="w-[92px]">Raster 0,0100</span>
          <span className="w-[26px]">mm</span>
          <span>Element(e) auswählen</span>
        </div>
        <div className="flex-1 bg-[linear-gradient(90deg,#14202c,#101a36_25%,#1c2142_55%,#2b1440_90%,#241238)] flex items-center text-white">
          <div className="w-[231px] pl-[13px] flex items-center gap-[3px] shrink-0 text-[6px] leading-[8px]">
            <svg viewBox="0 0 24 24" width="16" height="18"><path d="M14 2l2 3-2 2-3-1z" fill="#f2c84b" /><path d="M5 20a4 4 0 010-8 6 6 0 0111-1 4.500 4.500 0 012 9z" fill="#a9c6e8" /></svg>
            <span className="flex flex-col"><span>14°C</span><span className="text-[#ccc]">Stark bewölkt</span></span>
          </div>
          <div className="w-[14px] h-[14px] shrink-0"><Win /></div>
          <div className="ml-[6px] w-[110px] h-[15px] rounded-full bg-[#3a4058] flex items-center pl-[6px] gap-[3px] text-[6.500px] text-[#ddd] shrink-0">
            <Search size={8} />Suche
          </div>
          <div className="ml-[1px] w-[22px] h-[13px] flex justify-center shrink-0"><div className="w-[12px]">{appIcon.task}</div></div>
          <Taskbar step="w-[22px]" icon="w-[13px] h-[14px]" big={false} />
          <div className="ml-auto flex flex-col items-end pr-[21px] text-[6px] leading-[8px]">
            <span>22:29</span>
            <span>25.05.2025</span>
          </div>
        </div>
      </div>

      <Dialog />
    </div>
  );
}
